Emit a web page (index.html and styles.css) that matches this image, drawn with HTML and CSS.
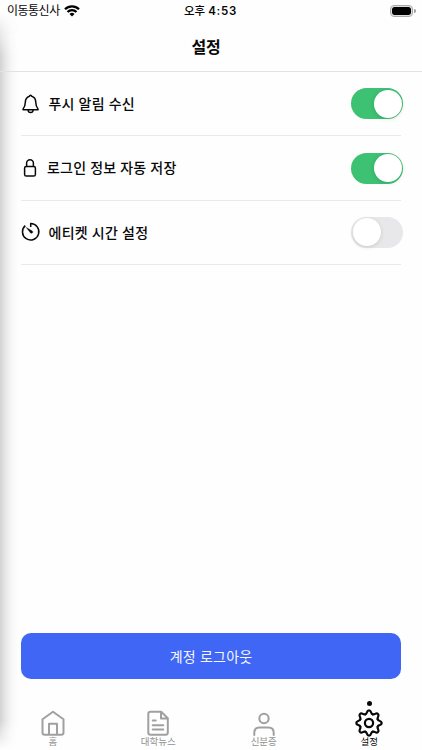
FILE: index.html
```
<!DOCTYPE html>
<html lang="ko">
<head>
<meta charset="utf-8">
<title>설정</title>
<link rel="stylesheet" href="styles.css">
</head>
<body>
<div class="screen">
  <div class="edge-shadow"></div>
  <header class="status">
    <div class="carrier"><span class="carrier-name">이동통신사</span>
      <svg class="wifi" width="16" height="12" viewBox="0 0 16 12"><path d="M8 11.600 10.500 9a3.600 3.600 0 0 0-5 0Z"/><path class="arc" d="M1 4.200a10 10 0 0 1 14 0M3.500 7a6.400 6.400 0 0 1 9 0"/></svg>
    </div>
    <div class="time">오후 <b>4:53</b></div>
    <div class="power"><span class="battery"></span><span class="cap"></span></div>
  </header>
  <h1 class="title">설정</h1>
  <main class="list">
    <div class="row">
      <svg class="icon" width="20" height="20" viewBox="0 0 20 20"><path d="M2.200 14.800c1.600-1.600 2-3 2.100-6.200C4.400 5 5.900 3 8.400 2.300c.3-1.300 2-1.300 2.300 0C13.300 3 14.700 5 14.800 8.600c.1 3.200.5 4.600 2.100 6.200q.6 1-.6 1H2.800q-1.200 0-.6-1ZM7.100 16.200c.2 3 4.800 3 5 0"/></svg>
      <span class="label push">푸시 알림 수신</span>
      <span class="switch on"><i class="knob"></i></span>
    </div>
    <div class="row">
      <svg class="icon" width="20" height="20" viewBox="0 0 20 20"><rect x="3.600" y="8.400" width="10.800" height="9.700" rx="1.700"/><path d="M5.600 8.400V5.200a3.400 3.400 0 0 1 6.800 0v3.200"/></svg>
      <span class="label save">로그인 정보 자동 저장</span>
      <span class="switch on"><i class="knob"></i></span>
    </div>
    <div class="row">
      <svg class="icon" width="20" height="20" viewBox="0 0 20 20"><path d="M9.700 5.100V1.600A8.200 8.200 0 1 1 4.300 3.600"/><path class="hand" d="m5.300 5.500 5.900 3.400c1.500 1.100-.2 3.200-1.700 2Z"/></svg>
      <span class="label etiquette">에티켓 시간 설정</span>
      <span class="switch"><i class="knob"></i></span>
    </div>
  </main>
  <button class="logout">계정 로그아웃</button>
  <nav class="tabs">
    <div class="tab">
      <svg width="28" height="28" viewBox="0 0 28 28"><path d="M3.500 10.300 14 2.800l10.500 7.500v13.200q0 2.200-2.200 2.200H5.700q-2.200 0-2.200-2.200ZM10 25.500V14.700h8v10.800"/></svg>
      <span>홈</span>
    </div>
    <div class="tab">
      <svg width="28" height="28" viewBox="0 0 28 28"><path d="M6.500 2.800h10.700l6.600 6.500v14.200q0 2.200-2.200 2.200H6.500q-2.200 0-2.200-2.200V5q0-2.200 2.200-2.200ZM17 3v6.500h6.500M8.700 11.500h3M8.700 16.200h10.600M8.700 20.500h10.600"/></svg>
      <span>대학뉴스</span>
    </div>
    <div class="tab">
      <svg width="28" height="28" viewBox="0 0 28 28"><circle cx="14" cy="9.500" r="4.700"/><path d="M4.300 26v-2.200q0-5.300 5.300-5.300h8.800q5.300 0 5.300 5.300V26"/></svg>
      <span>신분증</span>
    </div>
    <div class="tab active">
      <i class="dot"></i>
      <svg width="28" height="28" viewBox="-14 -14 28 28">
        <defs><path id="tooth" d="M-3.600-8.680C-1.300-9.600-2.800-12.700 0-12.700S1.300-9.600 3.600-8.680"/></defs>
        <use href="#tooth"/><use href="#tooth" transform="rotate(45)"/><use href="#tooth" transform="rotate(90)"/><use href="#tooth" transform="rotate(135)"/><use href="#tooth" transform="rotate(180)"/><use href="#tooth" transform="rotate(225)"/><use href="#tooth" transform="rotate(270)"/><use href="#tooth" transform="rotate(315)"/>
        <circle r="4.100"/>
      </svg>
      <span>설정</span>
    </div>
  </nav>
</div>
</body>
</html>
```
FILE: styles.css
```
* { box-sizing: border-box; }
body { margin: 0; background: #fff; color: #080808; font-family: Inter, "Noto Sans CJK KR", sans-serif; }
.screen { position: relative; width: 422px; height: 750px; display: flex; flex-direction: column; overflow: hidden; background: #fefefe; }
.edge-shadow { position: absolute; left: 0; top: 12px; bottom: 0; width: 18px; background: linear-gradient(90deg, #d2d2d2, #e3e3e3 25%, #f6f6f6 60%, #fefefe); -webkit-mask-image: linear-gradient(transparent, #000 45px, #000 calc(100% - 30px), transparent); mask-image: linear-gradient(transparent, #000 45px, #000 calc(100% - 30px), transparent); }
.status { position: relative; height: 22px; display: grid; grid-template-columns: 1fr 1fr 1fr; align-items: center; padding: 0 6px 0 7px; line-height: 20px; }
.carrier { display: flex; align-items: center; gap: 4px; font-size: 12px; }
.carrier-name { letter-spacing: -0.5px; white-space: nowrap; }
.wifi { fill: #000; }
.wifi .arc { fill: none; stroke: #000; stroke-width: 2.300; }
.time { text-align: center; font-size: 11.500px; font-weight: 500; white-space: nowrap; position: relative; left: -1px; }
.time b { font-weight: 600; letter-spacing: 0.700px; }
.power { display: flex; justify-content: flex-end; align-items: center; gap: 1px; }
.battery { width: 23px; height: 12px; border: 1px solid #a8a8a8; border-radius: 4px; padding: 1px; background: #000 content-box; box-shadow: inset 0 0 0 1px #ddd; }
.cap { width: 1.500px; height: 4px; border-radius: 0 2px 2px 0; background: #999; }
.title { position: relative; height: 50px; margin: 0; border-bottom: 1px solid #e2e2e2; text-align: center; font-size: 16px; font-weight: 700; line-height: 50px; letter-spacing: -0.200px; padding-right: 10px; }
.list { padding: 0 21px 0 20.500px; }
.row { height: 64.400px; display: flex; align-items: center; border-bottom: 1px solid #e9e9e9; }
.icon { flex: none; fill: none; stroke: #080808; stroke-width: 1.500; stroke-linejoin: round; }
.icon .hand { fill: #080808; stroke: #080808; stroke-width: 0.400; }
.label { flex: 1; margin-left: 8px; font-size: 14px; font-weight: 500; line-height: 20px; white-space: nowrap; letter-spacing: 0.200px; }
.save { margin-left: 6.500px; }
.etiquette { letter-spacing: 0.250px; padding-top: 1px; }
.switch { flex: none; width: 52px; height: 31px; margin-right: -2px; padding: 1.500px; border-radius: 16px; background: #e8e8ea; display: flex; }
.switch.on { background: #3dc173; justify-content: flex-end; }
.knob { width: 28px; height: 28px; border-radius: 50%; background: #fff; box-shadow: 0 1px 4px #0002; }
.logout { height: 46px; margin: auto 21px 0; padding: 2px 0 0; border: 0; border-radius: 10px; background: #4066f5; color: #f4f6ff; font-family: inherit; font-size: 14px; line-height: 44px; letter-spacing: 0.200px; }
.tabs { position: relative; height: 71px; display: grid; grid-template-columns: repeat(4, 1fr); padding-top: 30px; }
.tab { position: relative; display: flex; flex-direction: column; align-items: center; color: #929292; font-size: 9.500px; line-height: 10px; }
.tab svg { flex: none; fill: none; stroke: #a0a0a0; stroke-width: 2; stroke-linejoin: round; stroke-linecap: round; }
.tab span { white-space: nowrap; }
.tab.active { color: #080808; }
.tab.active svg { stroke: #080808; stroke-width: 2.200; }
.dot { position: absolute; top: -8px; width: 5px; height: 5px; border-radius: 50%; background: #080808; }
```
